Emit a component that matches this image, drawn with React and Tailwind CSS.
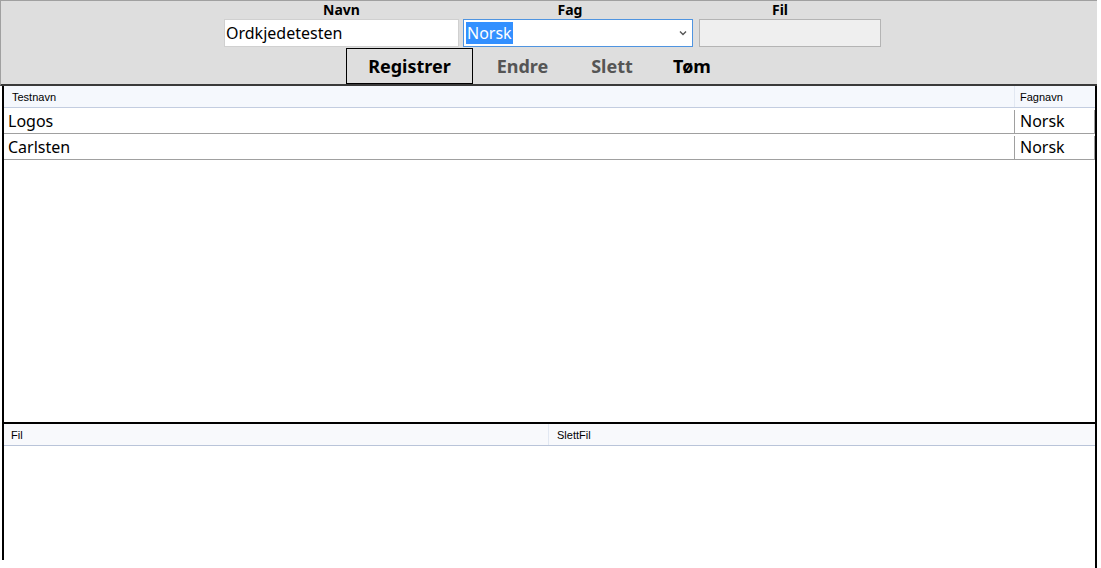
import React from 'react';

const rows = [
  { name: 'Logos', subject: 'Norsk' },
  { name: 'Carlsten', subject: 'Norsk' },
];

const ui = { fontFamily: '"Noto Sans", "Open Sans", sans-serif' };
const grid = { fontFamily: '"Liberation Sans", Arial, sans-serif' };

function Label({ children, className }) {
  return (
    <div className={`h-[18px] text-center text-[14px] font-bold leading-[18px] text-black ${className}`}>
      {children}
    </div>
  );
}

export default function App() {
  return (
    <div className="relative h-[568px] w-[1101px] overflow-hidden bg-white" style={ui}>
      {/* form panel */}
      <div className="h-[86px] w-[1097px] border-l border-t border-[#a0a0a0] border-b-2 border-b-[#3a3a3a] bg-[#dedede]">
        <div className="flex pl-[223px]">
          <div className="w-[235px]">
            <Label>Navn</Label>
            <div className="flex h-[28px] items-center border border-[#d0d0d0] bg-white pl-[1px] text-[16px] leading-[22px] text-black">
              Ordkjedetesten
            </div>
          </div>
          <div className="ml-[4px] w-[230px]">
            <Label className="pr-[16px]">Fag</Label>
            <div className="flex h-[28px] items-center justify-between border border-[#4f94e0] bg-white pl-[2px] pr-[5px] text-[16px]">
              <span className="bg-[#3390ff] px-[1px] leading-[22px] text-white">Norsk</span>
              <svg width="8" height="6" viewBox="0 0 8 6" className="text-[#555]">
                <path d="M1 1.5 L4 4.5 L7 1.5" fill="none" stroke="currentColor" strokeWidth="1.4" />
              </svg>
            </div>
          </div>
          <div className="ml-[6px] w-[182px]">
            <Label className="pr-[20px]">Fil</Label>
            <div className="h-[28px] border border-[#b4b4b4] bg-[#efefef]" />
          </div>
        </div>
        <div className="mt-[1px] flex h-[36px] pl-[345px] text-[18px] font-bold">
          <button className="w-[127px] border border-black text-black">Registrer</button>
          <button className="w-[99px] text-[#555]">Endre</button>
          <button className="w-[80px] text-[#555]">Slett</button>
          <button className="w-[80px] text-black">Tøm</button>
        </div>
      </div>

      {/* tests grid */}
      <div className="ml-[2px] w-[1095px] border-x-2 border-black" style={grid}>
        <div className="h-[336px]">
          <div className="flex h-[22px] border-b border-[#c3cde0] bg-[#f5f8fd] text-[11px] leading-[22px] text-black">
            <div className="w-[1011px] border-r border-[#e2e8f2] pl-[8px]">Testnavn</div>
            <div className="flex-1 pl-[5px]">Fagnavn</div>
          </div>
          {rows.map((row) => (
            <div
              key={row.name}
              className="flex h-[26px] border-b border-[#a0a0a0] pt-[2px] text-[16px] leading-[23px] text-black"
              style={ui}
            >
              <div className="w-[1011px] border-r border-[#a0a0a0] pl-[4px]">{row.name}</div>
              <div className="flex-1 border-r border-[#a0a0a0] pl-[5px]">{row.subject}</div>
            </div>
          ))}
        </div>

        {/* files grid */}
        <div className="h-[138px] border-t-2 border-black">
          <div className="flex h-[22px] border-b border-[#b9c4d9] bg-[#f8f9fc] text-[11px] leading-[22px] text-black">
            <div className="w-[545px] border-r border-[#e2e8f2] pl-[7px]">Fil</div>
            <div className="flex-1 pl-[8px]">SlettFil</div>
          </div>
        </div>
      </div>
      <div className="ml-[1095px] h-[8px] w-[2px] bg-black" />
    </div>
  );
}
